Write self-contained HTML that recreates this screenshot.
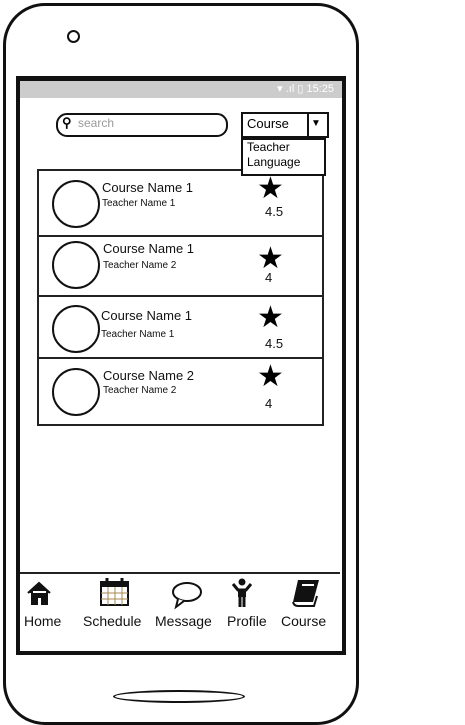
<!DOCTYPE html>
<html><head><style>
body{margin:0;width:465px;height:725px;background:#fff;font-family:"Liberation Sans",sans-serif;position:relative;overflow:hidden}
.a{position:absolute}
.phone{left:3px;top:3px;width:350px;height:716px;border:3px solid #111;border-radius:42px}
.screen{left:16px;top:76px;width:322px;height:570px;border:4px solid #111;border-top-width:5px}
.status{left:20px;top:81px;width:322px;height:17px;background:#ccc;color:#fff;font-size:11px;text-align:right}
.card{left:37px;width:283px;border:2px solid #222;background:#fff}
.circ{width:44px;height:44px;border:2px solid #111;border-radius:50%}
.t1{font-size:13px;color:#111}
.t2{font-size:10px;color:#111}
.star{font-size:30px;line-height:30px}
.nav{left:20px;top:572px;width:320px;height:72px;border-top:2px solid #222}
.lbl{font-size:14px;color:#111;top:613px}
</style></head><body>
<div class="a phone"></div>
<div class="a" style="left:67px;top:30px;width:9px;height:9px;border:2px solid #111;border-radius:50%"></div>
<div class="a" style="left:113px;top:690px;width:128px;height:9px;border:2px solid #111;border-radius:50%"></div>
<div class="a screen"></div>
<div class="a status"><span style="position:relative;top:1px;right:8px">▾ .ıl ▯ 15:25</span></div>
<div class="a" style="left:56px;top:113px;width:168px;height:20px;border:2px solid #111;border-radius:11px"></div>
<div class="a" style="left:62px;top:115px;font-size:13px;font-weight:bold">⚲</div>
<div class="a" style="left:78px;top:116px;font-size:12px;color:#999">search</div>
<div class="a" style="left:241px;top:112px;width:84px;height:22px;border:2px solid #111"></div>
<div class="a" style="left:307px;top:112px;width:2px;height:24px;background:#111"></div>
<div class="a" style="left:247px;top:116px;font-size:13px">Course</div>
<div class="a" style="left:311px;top:118px;font-size:10px">▼</div>

<div class="a card" style="top:169px;height:64px"></div>
<div class="a card" style="top:235px;height:58px"></div>
<div class="a card" style="top:295px;height:60px"></div>
<div class="a card" style="top:357px;height:65px"></div>

<div class="a" style="left:241px;top:138px;width:81px;height:34px;border:2px solid #111;background:#fff;z-index:5"></div>
<div class="a" style="left:247px;top:140px;font-size:12px;line-height:15px;z-index:6">Teacher<br>Language</div>

<div class="a circ" style="left:52px;top:180px"></div>
<div class="a t1" style="left:102px;top:180px">Course Name 1</div>
<div class="a t2" style="left:102px;top:198px">Teacher Name 1</div>
<div class="a star" style="left:257px;top:174px">★</div>
<div class="a t1" style="left:265px;top:204px">4.5</div>

<div class="a circ" style="left:52px;top:241px"></div>
<div class="a t1" style="left:103px;top:241px">Course Name 1</div>
<div class="a t2" style="left:103px;top:260px">Teacher Name 2</div>
<div class="a star" style="left:257px;top:244px">★</div>
<div class="a t1" style="left:265px;top:270px">4</div>

<div class="a circ" style="left:52px;top:305px"></div>
<div class="a t1" style="left:101px;top:308px">Course Name 1</div>
<div class="a t2" style="left:101px;top:329px">Teacher Name 1</div>
<div class="a star" style="left:257px;top:303px">★</div>
<div class="a t1" style="left:265px;top:336px">4.5</div>

<div class="a circ" style="left:52px;top:368px"></div>
<div class="a t1" style="left:103px;top:368px">Course Name 2</div>
<div class="a t2" style="left:103px;top:385px">Teacher Name 2</div>
<div class="a star" style="left:257px;top:362px">★</div>
<div class="a t1" style="left:265px;top:396px">4</div>

<div class="a nav"></div>
<svg class="a" style="left:26px;top:580px" width="30" height="26"><path d="M2 13 L13 3 L24 13 M6 11 V24 H11 V17 H16 V24 H21 V11" fill="#111" stroke="#111" stroke-width="2"/></svg>
<svg class="a" style="left:99px;top:577px" width="32" height="30"><rect x="2" y="5" width="27" height="23" fill="none" stroke="#111" stroke-width="2"/><rect x="2" y="5" width="27" height="5" fill="#111"/><path d="M9 10V28M16 10V28M23 10V28M2 16H29M2 22H29" stroke="#a85" stroke-width="1"/><path d="M8 1V7M23 1V7" stroke="#111" stroke-width="3"/></svg>
<svg class="a" style="left:169px;top:581px" width="34" height="30"><ellipse cx="18" cy="11" rx="14" ry="9" fill="none" stroke="#111" stroke-width="2"/><path d="M9 18 L7 26 L15 20" fill="#fff" stroke="#111" stroke-width="2"/></svg>
<svg class="a" style="left:230px;top:578px" width="24" height="30"><circle cx="12" cy="4" r="3.5" fill="#111"/><path d="M3 6 L8 12 H16 L21 6" stroke="#111" stroke-width="3" fill="none"/><rect x="8" y="11" width="8" height="8" fill="#111"/><path d="M10 18V29M14 18V29" stroke="#111" stroke-width="3"/></svg>
<svg class="a" style="left:290px;top:578px" width="32" height="30"><path d="M8 2 H29 L23 24 H3 Z" fill="#111"/><path d="M3 24 Q4 28 8 28 H24 L27 18" fill="none" stroke="#111" stroke-width="2"/><path d="M12 7 H24" stroke="#fff" stroke-width="2"/></svg>
<div class="a lbl" style="left:24px">Home</div>
<div class="a lbl" style="left:83px">Schedule</div>
<div class="a lbl" style="left:155px">Message</div>
<div class="a lbl" style="left:227px">Profile</div>
<div class="a lbl" style="left:281px">Course</div>
</body></html>
